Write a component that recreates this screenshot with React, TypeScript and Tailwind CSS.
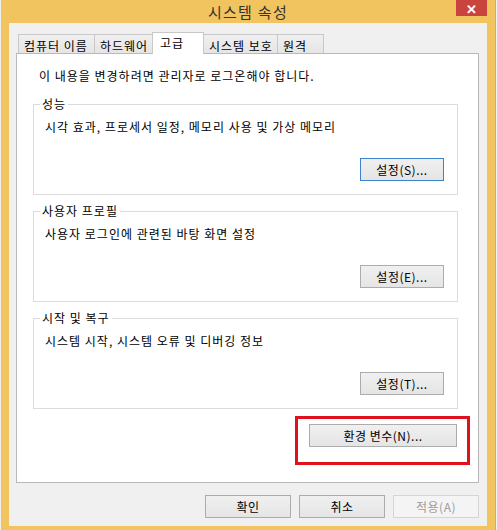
import React from "react";

const FONT = "font-['Noto_Sans_CJK_KR','Noto_Sans',sans-serif]";

type BtnProps = {
  label: string;
  w: string;
  variant?: "normal" | "default" | "disabled";
};

const Button = ({ label, w, variant = "normal" }: BtnProps) => {
  const look =
    variant === "default"
      ? "border-[#3c83c9] bg-linear-to-b from-[#f0f0f0] to-[#e5e5e5] text-black"
      : variant === "disabled"
        ? "border-[#d5d5d5] bg-[#f4f4f4] text-[#9c9c9c]"
        : "border-[#acacac] bg-linear-to-b from-[#f0f0f0] to-[#e5e5e5] text-black";
  return (
    <button
      className={`${w} h-[23px] border ${look} text-[12px] leading-[16px] tracking-[0.5px] flex items-center justify-center`}
    >
      {label}
    </button>
  );
};

const tabs = ["컴퓨터 이름", "하드웨어", "고급", "시스템 보호", "원격"];
const tabWidths = ["w-[77px]", "w-[59px]", "w-[52px]", "w-[75px]", "w-[47px]"];

type GroupProps = { title: string; desc: string; button: string; isDefault?: boolean };

const Group = ({ title, desc, button, isDefault }: GroupProps) => (
  <fieldset className="border border-[#dcdcdc] ml-[16px] mr-[20px]">
    <legend className="ml-[6px] px-[2px] text-[12px] leading-[16px] tracking-[1px]">{title}</legend>
    <div className="flex flex-col pl-[11px] pr-[13px] pb-[13px]">
      <p className="mt-[7px] text-[12px] leading-[16px] tracking-[1px]">{desc}</p>
      <div className="mt-[23px] flex justify-end">
        <Button label={button} w="w-[84px]" variant={isDefault ? "default" : "normal"} />
      </div>
    </div>
  </fieldset>
);

export default function App() {
  return (
    <div className={`w-[497px] h-[530px] flex overflow-hidden bg-white ${FONT}`}>
      <div className="w-[1px] bg-[#eeeeee]" />
      <div className="relative flex-1 flex flex-col bg-[#f2c45f] px-[8px] pb-[4px]">
        {/* title bar */}
        <div className="h-[23px] flex items-center justify-center">
          <span className="text-[15px] leading-[20px] text-[#333333] tracking-[1.3px]">시스템 속성</span>
        </div>
        <button className="absolute top-0 right-[8px] w-[31px] h-[16px] bg-[#c9443d] flex items-center justify-center text-white text-[13px] leading-none font-bold">
          ✕
        </button>

        {/* client area */}
        <div className="flex-1 bg-[#f0f0f0] pt-[9px] pl-[7px] pr-[8px] flex flex-col text-black">
          <div className="h-[21px] flex items-end ml-[2px]">
            {tabs.map((t, i) =>
              i === 2 ? (
                <div
                  key={t}
                  className={`${tabWidths[i]} -ml-px h-[22px] -mb-px relative z-10 bg-white border border-b-0 border-[#c8c8c8] text-[12px] leading-[16px] tracking-[1px] pt-[2px] pl-[7px]`}
                >
                  {t}
                </div>
              ) : (
                <div
                  key={t}
                  className={`${tabWidths[i]} ${i === 0 ? "" : "-ml-px"} h-[19px] bg-linear-to-b from-[#f0f0f0] to-[#e5e5e5] border border-b-0 border-[#c8c8c8] text-[12px] leading-[16px] tracking-[1px] pt-[3px] pl-[5px]`}
                >
                  {t}
                </div>
              )
            )}
          </div>

          <div className="h-[430px] bg-white border border-[#b9b9b9] flex flex-col">
            <p className="mt-[14px] ml-[22px] text-[12px] leading-[16px] tracking-[1px]">
              이 내용을 변경하려면 관리자로 로그온해야 합니다.
            </p>
            <div className="mt-[12px] flex flex-col gap-[8px]">
              <Group title="성능" desc="시각 효과, 프로세서 일정, 메모리 사용 및 가상 메모리" button="설정(S)..." isDefault />
              <Group title="사용자 프로필" desc="사용자 로그인에 관련된 바탕 화면 설정" button="설정(E)..." />
              <Group title="시작 및 복구" desc="시스템 시작, 시스템 오류 및 디버깅 정보" button="설정(T)..." />
            </div>
            <div className="mt-[7px] flex justify-end mr-[8px]">
              <div className="border-[3px] border-[#e0101c] pl-[11px] pr-[10px] pt-[5px] pb-[15px]">
                <Button label="환경 변수(N)..." w="w-[148px]" />
              </div>
            </div>
          </div>

          <div className="mt-[12px] flex justify-end gap-[8px]">
            <Button label="확인" w="w-[86px]" />
            <Button label="취소" w="w-[86px]" />
            <Button label="적용(A)" w="w-[86px]" variant="disabled" />
          </div>
        </div>
      </div>
      <div className="w-[2px] bg-[#f3f3f3] border-l border-[#b0b0b0]" />
    </div>
  );
}
